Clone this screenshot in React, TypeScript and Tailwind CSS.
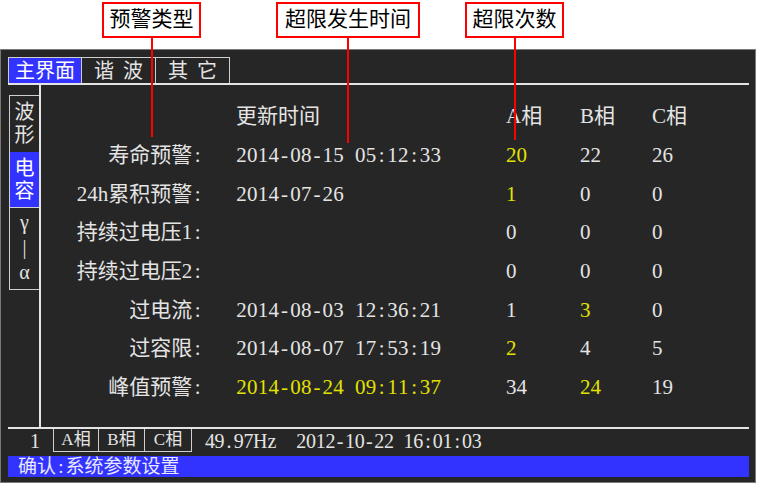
import React from "react";

// 半角字符逐个等宽排布，模仿宋体的半角数字
const Half = ({ text, w = "w-[10.8px]" }: { text: string; w?: string }) => (
  <span className="inline-flex">
    {text.split("").map((c, i) => (
      <span key={i} className={`inline-block ${w} text-center`}>
        {c}
      </span>
    ))}
  </span>
);

type Row = {
  label: string;
  time: string;
  a: string;
  b: string;
  c: string;
  hl?: string[];
};

const rows: Row[] = [
  { label: "寿命预警", time: "2014-08-15 05:12:33", a: "20", b: "22", c: "26", hl: ["a"] },
  { label: "24h累积预警", time: "2014-07-26", a: "1", b: "0", c: "0", hl: ["a"] },
  { label: "持续过电压1", time: "", a: "0", b: "0", c: "0" },
  { label: "持续过电压2", time: "", a: "0", b: "0", c: "0" },
  { label: "过电流", time: "2014-08-03 12:36:21", a: "1", b: "3", c: "0", hl: ["b"] },
  { label: "过容限", time: "2014-08-07 17:53:19", a: "2", b: "4", c: "5", hl: ["a"] },
  { label: "峰值预警", time: "2014-08-24 09:11:37", a: "34", b: "24", c: "19", hl: ["time", "b"] },
];

const color = (r: Row, key: string) =>
  r.hl?.includes(key) ? "text-[#e2e200]" : "text-[#e4e4e4]";

const App = () => {
  return (
    <div className="relative w-[757px] h-[485px] bg-white overflow-hidden font-['Liberation_Serif','Noto_Sans_CJK_SC',serif] text-[#e4e4e4]">
      {/* 顶部标注区 */}
      <div className="h-[49px]" />

      {/* 仪表屏幕 */}
      <div className="w-[756px] h-[434px] border border-[#7a7a7a] bg-[#262626] pt-[7px] pl-[7px] pr-[6px] flex flex-col">
        {/* 顶部页签 */}
        <div className="flex h-[28px] border-b-2 border-[#e4e4e4]">
          <div className="w-[74px] border border-b-0 border-[#cfcfcf] bg-[#3333ff] flex items-center justify-center text-[20px] leading-none text-white">
            主界面
          </div>
          <div className="w-[74px] border-t border-r border-[#cfcfcf] flex items-center justify-center text-[20px] leading-none">
            谐<span className="inline-block w-[9px]" />波
          </div>
          <div className="w-[74px] border-t border-r border-[#cfcfcf] flex items-center justify-center text-[20px] leading-none">
            其<span className="inline-block w-[9px]" />它
          </div>
        </div>

        {/* 主体 */}
        <div className="flex h-[344px] border-b-2 border-[#e4e4e4]">
          {/* 侧边页签 */}
          <div className="w-[33px] border-r-2 border-[#e4e4e4] pt-[10px] pl-[1px]">
            <div className="border border-r-0 border-[#cfcfcf] flex flex-col">
              <div className="h-[56px] flex flex-col items-center justify-center text-[20px] leading-[23px]">
                <span>波</span>
                <span>形</span>
              </div>
              <div className="h-[55px] bg-[#3333ff] flex flex-col items-center justify-center text-[20px] leading-[23px] text-white">
                <span>电</span>
                <span>容</span>
              </div>
              <div className="h-[82px] border-t border-[#cfcfcf] flex flex-col items-center pt-[2px] text-[20px] leading-[25px]">
                <span>γ</span>
                <span>|</span>
                <span>α</span>
              </div>
            </div>
          </div>

          {/* 数据表 */}
          <div className="flex-1 pt-[12px] text-[21px]">
            <div className="grid grid-cols-[195px_270px_74px_72px_1fr] auto-rows-[38.67px] items-center leading-[24px]">
              <div />
              <div>更新时间</div>
              <div>A相</div>
              <div>B相</div>
              <div>C相</div>

              {rows.map((r) => (
                <React.Fragment key={r.label}>
                  <div className="text-right pr-[33px]">
                    {r.label}
                    <span className="inline-block w-[10.8px] text-center">:</span>
                  </div>
                  <div className={color(r, "time")}>
                    {r.time && <Half text={r.time} />}
                  </div>
                  <div className={color(r, "a")}>{r.a}</div>
                  <div className={color(r, "b")}>{r.b}</div>
                  <div className={color(r, "c")}>{r.c}</div>
                </React.Fragment>
              ))}
            </div>
          </div>
        </div>

        {/* 状态栏 */}
        <div className="flex h-[24px] text-[20px] leading-[22px]">
          <div className="w-[45px] text-right pr-[13px] self-center">1</div>
          <div className="flex h-[23px]">
            <div className="w-[46px] border border-t-0 border-[#cfcfcf] flex items-center justify-center text-[17px]">
              A相
            </div>
            <div className="w-[46px] border-r border-b border-[#cfcfcf] flex items-center justify-center text-[17px]">
              B相
            </div>
            <div className="w-[47px] border-r border-b border-[#cfcfcf] flex items-center justify-center text-[17px]">
              C相
            </div>
          </div>
          <div className="ml-[13px] self-center">
            <Half text="49.97" w="w-[9.6px]" />
            Hz
          </div>
          <div className="ml-[20px] self-center">
            <Half text="2012-10-22 16:01:03" w="w-[9.75px]" />
          </div>
        </div>

        <div className="mt-[3px] h-[21px] bg-[#3333ff] pl-[10px] text-[19px] leading-[21px] text-[#e8e8ff]">
          确认<span className="inline-block w-[9.5px] text-center">:</span>系统参数设置
        </div>
      </div>

      {/* 标注 */}
      <div className="absolute left-[102px] top-[2px] w-[99px] h-[36px] border-2 border-[#ff0000] bg-white flex items-center justify-center text-[21px] text-black">
        预警类型
      </div>
      <div className="absolute left-[151px] top-[38px] w-[2px] h-[99px] bg-[#ff0000]" />

      <div className="absolute left-[276px] top-[2px] w-[144px] h-[36px] border-2 border-[#ff0000] bg-white flex items-center justify-center text-[21px] text-black">
        超限发生时间
      </div>
      <div className="absolute left-[347px] top-[38px] w-[2px] h-[105px] bg-[#ff0000]" />

      <div className="absolute left-[465px] top-[2px] w-[99px] h-[36px] border-2 border-[#ff0000] bg-white flex items-center justify-center text-[21px] text-black">
        超限次数
      </div>
      <div className="absolute left-[514px] top-[38px] w-[2px] h-[102px] bg-[#ff0000]" />
    </div>
  );
};

export default App;
